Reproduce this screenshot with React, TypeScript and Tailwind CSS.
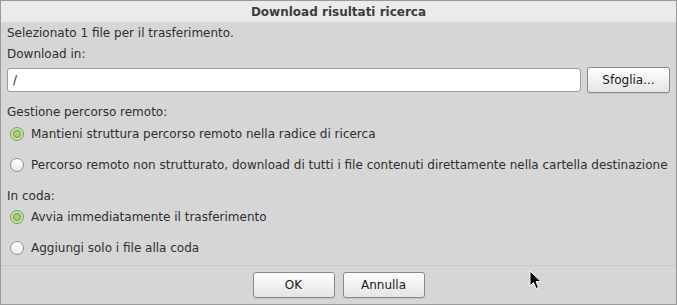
import { ReactNode } from "react"

function Radio({ checked, children, className }: { checked?: boolean; children: ReactNode; className?: string }) {
  return (
    <label className={"flex items-center h-[22px] pl-[9px] gap-[7px] " + (className || "")}>
      {checked ? (
        <span className="w-[14px] h-[14px] rounded-full border border-[#7ba05a] bg-[#c5e0a8] flex items-center justify-center">
          <span className="w-[8px] h-[8px] rounded-full border border-[#6e9a48] bg-[#a8d07c]" />
        </span>
      ) : (
        <span className="w-[14px] h-[14px] rounded-full border border-[#8e8e8e] bg-gradient-to-b from-[#ffffff] to-[#ececec]" />
      )}
      <span>{children}</span>
    </label>
  )
}

function Button({ children, className }: { children: ReactNode; className?: string }) {
  return (
    <button
      type="button"
      className={
        "h-[26px] rounded-[3px] border border-[#8a8a8a] bg-gradient-to-b from-[#ffffff] to-[#e4e4e4] text-[#1a1a1a] shadow-[0_1px_0_#c4c4c4] " +
        (className || "")
      }
    >
      {children}
    </button>
  )
}

export default function App() {
  return (
    <div className="w-[677px] h-[305px] border border-[#9a9a9a] bg-[#d6d6d6] text-[12px] text-[#2e2e2e] font-['DejaVu_Sans',sans-serif] flex flex-col relative overflow-hidden">
      <div className="h-[21px] bg-[#ebebeb] flex items-center justify-center font-bold text-[#3c3c3c] text-[12px]">
        Download risultati ricerca
      </div>
      <div className="flex flex-col px-[6px]">
        <div className="h-[21px] flex items-center">Selezionato 1 file per il trasferimento.</div>
        <div className="h-[21px] flex items-center">Download in:</div>
        <div className="flex items-center gap-[6px] mt-[3px]">
          <div className="w-[574px] h-[24px] rounded-[3px] border border-[#9c9c9c] bg-white flex items-center px-[5px]">/</div>
          <Button className="w-[83px]">Sfoglia...</Button>
        </div>
        <div className="h-[22px] flex items-center mt-[8px]">Gestione percorso remoto:</div>
        <div className="-ml-[6px] flex flex-col">
          <Radio checked>Mantieni struttura percorso remoto nella radice di ricerca</Radio>
          <Radio className="mt-[9px]">Percorso remoto non strutturato, download di tutti i file contenuti direttamente nella cartella destinazione</Radio>
        </div>
        <div className="h-[21px] flex items-center mt-[9px]">In coda:</div>
        <div className="-ml-[6px] flex flex-col">
          <Radio checked>Avvia immediatamente il trasferimento</Radio>
          <Radio className="mt-[9px]">Aggiungi solo i file alla coda</Radio>
        </div>
      </div>
      <div className="mt-auto border-t border-[#c8c8c8] h-[39px] flex items-center justify-center gap-[8px] pb-[1px]">
        <Button className="w-[82px]">OK</Button>
        <Button className="w-[82px]">Annulla</Button>
      </div>
      <svg className="absolute left-[528px] top-[269px]" width="14" height="20" viewBox="0 0 14 20">
        <path d="M1 1 L1 16 L4.5 12.5 L7 18.5 L9.5 17.5 L7 11.5 L12 11.5 Z" fill="#000" stroke="#fff" strokeWidth="1" />
      </svg>
    </div>
  )
}
